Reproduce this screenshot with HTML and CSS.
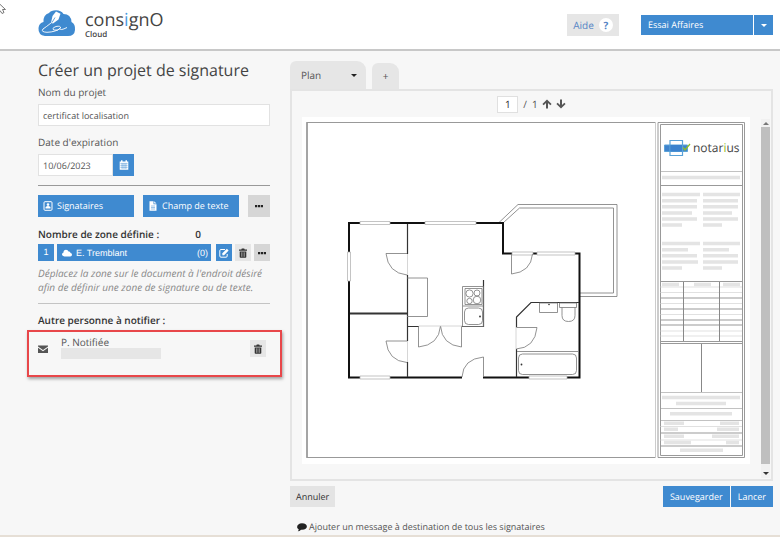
FILE: index.html
```html
<!DOCTYPE html>
<html lang="fr">
<head>
<meta charset="utf-8">
<meta name="viewport" content="width=device-width, initial-scale=1">
<title>ConsignO Cloud</title>
<link rel="stylesheet" href="styles.css">
</head>
<body>
<svg class="pointer" viewBox="0 0 7 14" aria-hidden="true"><path d="M-3 0.500L5.500 8.500H2.500L4 11.500L2 12.500L0 9.500" fill="#fff" stroke="#777"/></svg>
<svg class="sprite" aria-hidden="true">
  <symbol id="trash" viewBox="0 0 10 10"><path d="M1 1.500h2.300L3.800.4h2.400l.5 1.100H9v1.300H1zM1.700 3.400h6.600V9q0 .8-.8.8h-5q-.8 0-.8-.8z" fill="#333"/><path d="M3.500 4.300v4.500M5 4.300v4.500M6.500 4.300v4.500" stroke="#bbb" stroke-width=".6"/></symbol>
  <symbol id="dots" viewBox="0 0 10 10"><path d="M1 4h2.200v2.200H1zM3.900 4h2.200v2.200H3.900zM6.800 4H9v2.200H6.800z" fill="#222"/></symbol>
  <symbol id="arrow" viewBox="0 0 10 10"><path d="M5 .5L9.600 5 8.300 6.300 6 4.100V9.500H4V4.100L1.700 6.300.4 5z" fill="#555"/></symbol>
</svg>

<header class="topbar">
  <a class="brand" href="#" aria-label="consignO Cloud">
    <svg class="brand-mark" viewBox="0 0 38 27" aria-hidden="true">
      <path d="M7 26Q0 25 .5 18 1 13 5.500 12 5 5 11 3 13 .5 18 .3 23 .3 25.500 4 33 4 33.500 12 37.500 14 37 20 36.500 26 30 26z" fill="#3f8ad0"/>
      <path d="M13 13L14.500 6l3.500-4.500 4.500 2.200-2 5.800-5.500 4z" fill="#fff"/>
      <path d="M14 12.500l3-5" stroke="#3f8ad0" stroke-width=".8"/>
      <path d="M13 13Q8 17 5 19 2.500 22 9 22.300 18 22 22.500 18 23 15.500 18 16.500 13 18.500 16 20 20 21 22 18.500 22 21 29 17.500" fill="none" stroke="#fff" stroke-width=".9"/>
    </svg>
    <span class="brand-text"><span class="brand-name">cons<span class="accent">i</span>gnO</span><span class="brand-sub">Cloud</span></span>
  </a>
  <div class="top-actions">
    <button class="help" type="button">Aide <span class="help-mark">?</span></button>
    <div class="account">
      <button class="account-name" type="button">Essai Affaires</button>
      <button class="account-toggle" type="button" aria-label="Menu du compte"><span class="caret"></span></button>
    </div>
  </div>
</header>

<main class="workspace">
  <section class="sidebar">
    <h1>Créer un projet de signature</h1>
    <label for="name">Nom du projet</label>
    <input id="name" type="text" value="certificat localisation">
    <label for="expiry">Date d'expiration</label>
    <div class="date">
      <input id="expiry" type="text" value="10/06/2023">
      <button class="blue" type="button" aria-label="Calendrier">
        <svg class="icon" viewBox="0 0 10 10" aria-hidden="true"><path d="M.7 1.500h1.300V.3h1.500v1.200h3V.3H8v1.200h1.300v8.200H.7z" fill="#fff"/><path d="M1.400 3.400h7.200M1.400 5.300h7.200M1.400 7.300h7.200M3.100 3.500v5.500M5 3.500v5.500M6.900 3.500v5.500" stroke="#3f8ad0" stroke-width=".5"/></svg>
      </button>
    </div>
    <hr class="strong">
    <div class="tools">
      <button class="blue tool" type="button"><svg class="icon" viewBox="0 0 10 10" aria-hidden="true"><rect x="1" y=".7" width="8" height="8.600" rx="1" fill="none" stroke="#fff"/><circle cx="5" cy="3.600" r="1.300" fill="#fff"/><path d="M2.500 7.500V6Q5 4 7.500 6v1.500z" fill="#fff"/></svg>Signataires</button>
      <button class="blue tool" type="button"><svg class="icon" viewBox="0 0 10 10" aria-hidden="true"><path d="M1.500.3h4v3h3v6.400h-7zM6.200.3l2.300 2.300H6.200z" fill="#fff"/><path d="M3 5h4M3 6.500h4M3 8h4" stroke="#3f8ad0" stroke-width=".5"/></svg>Champ de texte</button>
      <button class="more" type="button" aria-label="Plus d'outils"><svg class="icon"><use href="#dots"/></svg></button>
    </div>
    <p class="count"><span>Nombre de zone définie :</span><span>0</span></p>
    <div class="signer">
      <span class="rank">1</span>
      <button class="signer-name" type="button"><svg class="icon" viewBox="0 0 10 10" aria-hidden="true"><path d="M2.400 8.500Q0 8.300 0 6.300 0 4.700 1.500 4.400 1.500 1.800 4 1.800 6 1.800 6.500 3.500 8.300 3.100 8.500 5 10 5.300 10 6.800 10 8.500 8.200 8.500z" fill="#fff"/></svg>E. Tremblant<span class="zones">(0)</span></button>
      <button class="mini edit" type="button" aria-label="Modifier"><svg class="icon" viewBox="0 0 10 10" aria-hidden="true"><path d="M6 1.500H2Q.8 1.500.8 2.700V8Q.8 9.200 2 9.200h5Q8.200 9.200 8.200 8V6" fill="none" stroke="#fff"/><path d="M3.400 7.200V5.300L7.900.7l1.700 1.700-4.500 4.800z" fill="#fff"/></svg></button>
      <button class="mini" type="button" aria-label="Supprimer le signataire"><svg class="icon"><use href="#trash"/></svg></button>
      <button class="mini dark" type="button" aria-label="Plus d'options"><svg class="icon"><use href="#dots"/></svg></button>
    </div>
    <p class="hint">Déplacez la zone sur le document à l'endroit désiré afin de définir une zone de signature ou de texte.</p>
    <hr>
    <h2>Autre personne à notifier :</h2>
    <div class="notified">
      <svg class="icon" viewBox="0 0 10 10" aria-hidden="true"><path d="M0 1.500h10v1L5 6 0 2.500zM0 3.700l5 3.500 5-3.500V9H0z" fill="#555"/></svg>
      <div class="person"><span>P. Notifiée</span><span class="masked"></span></div>
      <button class="mini" type="button" aria-label="Supprimer la personne"><svg class="icon"><use href="#trash"/></svg></button>
    </div>
  </section>

  <section class="document">
    <div class="tabs">
      <button class="tab" type="button">Plan <span class="caret"></span></button>
      <button class="tab add" type="button">+</button>
    </div>
    <div class="viewer">
      <div class="sheet-column">
        <div class="pager">
          <input type="text" value="1" aria-label="Page">
          <span>/</span><span>1</span>
          <button type="button" aria-label="Page précédente"><svg class="icon"><use href="#arrow"/></svg></button>
          <button type="button" aria-label="Page suivante"><svg class="icon flip"><use href="#arrow"/></svg></button>
        </div>
        <svg class="sheet" viewBox="302 117 448 347" role="img" aria-label="Plan">
          <path d="M302 117h448v347H302z" fill="#fff"/>
          <g fill="none" stroke="#999">
            <path d="M655.500 122.500H307V457.500H655.500"/><path d="M307 122v336" stroke-width="1.500"/>
            <path d="M655.500 122v336" stroke="#ccc"/>
            <path d="M658 122.500h86.500v335H658z" /><path d="M660.500 124.500h82v331h-82z"/>
          </g>
          <!-- terrace -->
          <g fill="none" stroke="#777" stroke-width=".8"><path d="M499 222.500L518 204.500h99v92h-37M503 223l16.500-15H613.500v85H580"/></g>
          <!-- outer walls -->
          <path d="M349 378V223h154v30.500h76.500V377.500H483M462 377.500H348" fill="none" stroke="#111" stroke-width="2"/>
          <g fill="#fff" stroke="#aaa" stroke-width=".7"><path d="M360 221.500h30v3h-30zM425 221.500h51v3h-51zM347.500 252h3v29h-3zM360 376h30v3h-30zM537 252h38v3h-38zM529 376h38v3h-38zM512 252h21v3h-21z"/></g>
          <!-- partitions -->
          <path d="M407.500 224v30M407.500 275v66M407.500 362v15M483.500 280v46.500H462M419 326.500h-12M516.500 377v-28M516.500 327v-10L531 302.500h48" fill="none" stroke="#333" stroke-width="1.200"/>
          <path d="M350 313.500h57" stroke="#333" stroke-width="1.800"/>
          <g fill="none" stroke="#777" stroke-width=".8">
            <path d="M407 253.500H386Q388 273 407 275M407 341H386Q388 361 407 362.500M407 278h20.500v38.500H407M418.500 326v21Q439 345 440.500 326M461.500 326v21Q442 345 440.500 326M462 377Q463 359 483.500 357v20M511.500 254v20Q531 272 532.500 254M516 327.500h21Q535 348 516 349"/>
            <path d="M462.500 286.500h21v40h-21zM465 288.500h17v16h-17zM463 306h20"/>
            <rect x="464.500" y="308" width="18" height="16.500" rx="4"/>
            <circle cx="469.500" cy="293.500" r="3.600"/><circle cx="477" cy="293" r="3"/><circle cx="469.500" cy="301" r="2.700"/><circle cx="477" cy="300" r="3.800"/>
            <path d="M539.500 303h18v9.500h-18zM559.500 303h17v4.500h-17zM562 307.500v8Q562 321.500 568.500 321.500T575 315.500v-8M517 351.500h61"/>
            <rect x="518.500" y="354" width="58" height="20.500" rx="4"/>
            <path d="M407.500 254v21M407.500 341v21M419 326h43M516 327v22" stroke="#ccc"/>
          </g>
          <g fill="#333"><circle cx="549" cy="304.500" r=".8"/><circle cx="480" cy="316.500" r=".9"/><circle cx="521.500" cy="364.500" r=".9"/></g>
          <!-- title block -->
          <g fill="none" stroke="#5aa2d8"><path d="M664.500 145h23v6.500h-23z" fill="#3f83cc"/><path d="M670 140.500h12.500v15H670z" stroke-width="1.200"/><path d="M670.500 145h11.500v6.500h-11.500z" fill="#3b82ce" stroke="none"/><path d="M683 147.500l2 2.500 5-6" stroke="#8fbd29" stroke-width="1.300"/></g>
          <text x="693" y="151.500" class="notarius">notar<tspan class="leaf">i</tspan>us</text>
          <g stroke="#999" fill="none">
            <path d="M660 171.500h82M660 392.500h82M660 408.500h82M660 420.500h82" stroke-width=".6"/>
            <path d="M660 185.500h82M660 281.500h82M660 298h82M660 341.500h82M660 343.500h82M660 446h82M660 433h82"/>
            <path d="M660 287h82M660 292.500h82M660 303.500h82M660 314.500h82M660 331h82M660 336h82M660 426.500h82M660 440h82" stroke="#ccc" stroke-width=".6"/>
            <path d="M660 309h82M660 320h82M660 325h82" />
            <path d="M683.500 282v59M701.500 344v48M719.500 282v59" stroke="#888"/>
          </g>
          <g stroke="#e4e4e4" stroke-width="3.400">
            <path d="M662 177.500h78M662 194.500h38M662 200.700h35M662 206.700h35M662 213h30M662 219h35M662 225h20M703 194.500h37M703 200.700h35M703 206.700h35M703 213h29M703 219h35M703 225h19"/>
            <path d="M662 243.500h38M662 249.700h26M662 255.700h35M662 262h36M662 268h20M703 243.500h37M703 249.700h26M703 255.700h35M703 262h35M703 268h19M662 284.500h17M694 284.500h17M723 284.500h17"/>
            <path d="M662 397.500h78M676 403.500h50M670 413.700h62M664 423.200h20M720 423.200h19M664 429.300h14M717 429.300h22M664 436.300h20M712 436.300h27M664 442.500h27M726 442.500h13M680 450.300h43"/>
          </g>
        </svg>
      </div>
      <div class="scrollbar" aria-hidden="true"><span class="up"></span><span class="thumb"></span><span class="down"></span></div>
    </div>
    <div class="actions">
      <button class="plain" type="button">Annuler</button>
      <button class="blue" type="button">Sauvegarder</button>
      <button class="blue" type="button">Lancer</button>
    </div>
    <a class="message" href="#"><svg class="icon" viewBox="0 0 10 10" aria-hidden="true"><path d="M5 1.300c6.500 0 6.500 6.500 0 6.500H4Q2.600 9.300.7 9.300 1.700 8.500 1.700 7.200C-1.500 5.500.5 1.300 5 1.300z" fill="#222"/></svg>Ajouter un message à destination de tous les signataires</a>
  </section>
</main>
</body>
</html>
```

FILE: styles.css
```css
* { box-sizing: border-box; }

body {
  margin: 0;
  min-height: 100vh;
  display: flex;
  flex-direction: column;
  background: #f7f7f7;
  border-bottom: 2px solid #e6dfd6;
  color: #555;
  font: 10px/14px "Open Sans", sans-serif;
  text-rendering: geometricPrecision;
}

button, input { font: inherit; font-size: 9px; color: inherit; border: 0; margin: 0; padding: 0; border-radius: 0; text-rendering: inherit; }
button { display: flex; align-items: center; justify-content: center; cursor: pointer; white-space: nowrap; }
a { color: inherit; text-decoration: none; }
h1, h2, p { margin: 0; }

.sprite { position: absolute; width: 0; height: 0; }
.pointer { position: absolute; left: 0; top: 1px; width: 7px; height: 14px; }
.icon { width: 10px; height: 10px; flex: none; }
.flip { transform: rotate(180deg); }
.caret { border: 3px solid transparent; border-top-color: currentColor; border-bottom: 0; }

.topbar {
  display: flex;
  justify-content: space-between;
  height: 51px;
  padding: 10px 7px 0 38px;
  background: #fff;
  border-bottom: 2px solid #c8c8c8;
}
.brand { display: flex; gap: 9px; }
.brand-mark { width: 38px; height: 27px; }
.brand-text { display: flex; flex-direction: column; color: #444; }
.brand-name { font-size: 18px; line-height: 20px; }
.accent { color: #4a9be0; }
.brand-sub { font-size: 8px; line-height: 10px; font-weight: 600; }
.top-actions { display: flex; align-items: flex-start; gap: 22px; padding-top: 4px; }
.help { gap: 5px; width: 52px; height: 22px; background: #e6e6e6; color: #5585c5; font-size: 10px; }
.help-mark { width: 14px; border-radius: 50%; background: #fff; font-weight: 700; text-align: center; }
.account { display: flex; gap: 1px; padding-top: 1px; }
.account button { height: 20px; background: #3f8ad0; color: #fff; }
.account .account-name { width: 112px; padding-left: 7px; justify-content: flex-start; }
.account .account-toggle { width: 19px; }

.workspace { flex: 1; display: flex; gap: 20px; padding: 10px 7px 0 38px; }

.sidebar { width: 232px; flex: none; }
h1 { font-size: 16px; line-height: 18px; font-weight: 400; color: #444; white-space: nowrap; }
label { display: block; margin-top: 9px; margin-bottom: 5px; }
h1 + label { margin-top: 6px; }
.sidebar input { display: block; width: 100%; height: 22px; padding: 0 4px; background: #fff; border: 1px solid #e2e2e2; }
.date { display: flex; }
.sidebar .date input { width: 75px; }
.blue { background: #3f8ad0; color: #fff; }
.date .blue { width: 21px; height: 22px; }
hr { margin: 9px 0; border: 0; border-top: 1px solid #c4c4c4; }
hr.strong { border-color: #999; }
.tools { display: flex; justify-content: space-between; }
.tools button { height: 22px; }
.tools .tool { width: 96px; gap: 4px; padding: 0 5px; justify-content: flex-start; }
.tools .more { width: 22px; background: #d6d6d6; }
.count { display: flex; gap: 36px; margin: 10px 0 3px; font-weight: 600; color: #333; }
.signer { display: flex; gap: 3px; height: 17px; }
.rank, .signer-name { background: #3f8ad0; color: #fff; font-family: "Liberation Sans", sans-serif; font-size: 9px; }
.rank { width: 16px; line-height: 17px; text-align: center; }
.signer-name { flex: 1; gap: 4px; padding: 0 3px 0 5px; }
.zones { margin-left: auto; }
.mini { width: 16px; height: 17px; background: #e6e6e6; }
.edit { background: #3f8ad0; margin-left: 2px; }
.dark { background: #d6d6d6; }
.hint { margin: 5px 0 9px; font-style: italic; color: #888; }
h2 { font-size: 10px; line-height: 14px; font-weight: 600; color: #333; }
.notified {
  display: flex;
  align-items: flex-start;
  margin: 3px -12px 0 -11px;
  height: 47px;
  padding: 4px 14px 0 9px;
  border: 2px solid #e8474a;
  box-shadow: 1px 2px 3px rgba(0, 0, 0, .35);
}
.notified .icon { margin-top: 8px; }
.notified .mini { margin-top: 4px; }
.notified .mini .icon { margin: 0; }
.person { flex: 1; padding-left: 13px; }
.person span { display: block; line-height: 12px; }
.masked { width: 100px; height: 11px; background: #e6e6e6; }

.document { flex: 1; min-width: 0; }
.tabs { display: flex; align-items: flex-end; gap: 6px; height: 28px; }
.tab { width: 76px; height: 28px; padding: 0 9px 0 11px; justify-content: space-between; background: #e6e6e6; border-radius: 6px 9px 0 0; font-size: 10px; }
.tab .caret { border-top-color: #222; }
.add { width: 27px; height: 26px; padding: 0; justify-content: center; }
.viewer { display: flex; border: 2px solid #e4e4e4; padding: 0 0 15px 10px; }
.sheet-column { flex: 1; min-width: 0; }
.pager { display: flex; align-items: center; justify-content: center; gap: 5px; height: 26px; padding-left: 11px; }
.pager input { width: 21px; height: 17px; text-align: center; background: #fff; border: 1px solid #e0e0e0; color: #333; font-size: 10px; }
.pager button { width: 9px; background: none; }
.sheet { display: block; width: 100%; height: auto; }
.notarius { font: 12px "Open Sans", sans-serif; fill: #444; }
.notarius .leaf { fill: #8fbd29; }
.scrollbar { display: flex; flex-direction: column; align-items: center; width: 9px; margin: 28px 1px -14px 11px; background: #f1f1f1; }
.up { border: 3px solid transparent; border-bottom-color: #777; border-top: 0; margin: 3px 0 2px; }
.thumb { flex: 1; width: 9px; background: #bfbfbf; }
.down { border: 3px solid transparent; border-top-color: #333; border-bottom: 0; margin: 8px 0 3px; }
.actions { display: flex; gap: 1px; margin-top: 5px; }
.actions button { height: 21px; padding: 0 7px; }
.actions .plain { margin-right: auto; padding: 0 6px; background: #e4e4e4; color: #333; }
.message { display: flex; align-items: center; gap: 2px; margin: 13px 0 0 7px; font-size: 9px; }
```
